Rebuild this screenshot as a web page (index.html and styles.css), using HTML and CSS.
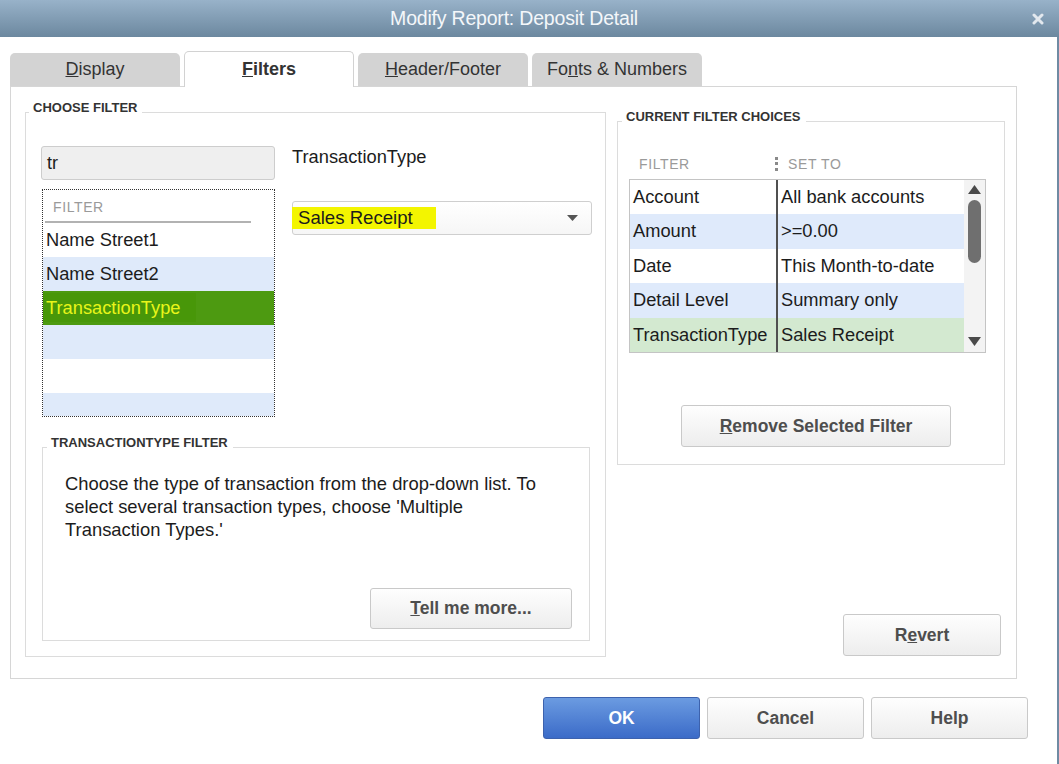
FILE: index.html
```html
<!DOCTYPE html>
<html>
<head>
<meta charset="utf-8">
<title>Modify Report: Deposit Detail</title>
<link rel="stylesheet" href="styles.css">
</head>
<body>
<div class="window">
  <div class="titlebar">
    <div class="title">Modify Report: Deposit Detail</div>
    <div class="close">
      <svg width="12" height="12" viewBox="0 0 12 12"><path d="M2 2L10 10M10 2L2 10" stroke="#e2e8ee" stroke-width="3" stroke-linecap="round"/></svg>
    </div>
  </div>
  <div class="dialog">
    <div class="tabs">
      <div class="tab"><u>D</u>isplay</div>
      <div class="tab active"><u>F</u>ilters</div>
      <div class="tab"><u>H</u>eader/Footer</div>
      <div class="tab">Fo<u>n</u>ts &amp; Numbers</div>
    </div>
    <div class="panel">
      <fieldset class="group choose">
        <legend class="legend">CHOOSE FILTER</legend>
        <div class="choose-top">
          <div class="choose-left">
            <div class="search">tr</div>
            <div class="list">
              <div class="list-head"><span class="list-head-text">FILTER</span></div>
              <div class="list-row">Name Street1</div>
              <div class="list-row alt">Name Street2</div>
              <div class="list-row sel"><span class="sel-text">TransactionType</span></div>
              <div class="list-row alt"></div>
              <div class="list-row"></div>
              <div class="list-row alt"></div>
            </div>
          </div>
          <div class="choose-right">
            <div class="field-label">TransactionType</div>
            <div class="dropdown">
              <span class="marker">Sales Receipt</span>
              <svg class="caret" width="11" height="6" viewBox="0 0 11 6"><path d="M0 0H11L5.5 6Z" fill="#555"/></svg>
            </div>
          </div>
        </div>
        <fieldset class="group tt">
          <legend class="legend">TRANSACTIONTYPE FILTER</legend>
          <p class="desc">Choose the type of transaction from the drop-down list. To<br>select several transaction types, choose 'Multiple<br>Transaction Types.'</p>
          <button class="btn tell"><u>T</u>ell me more...</button>
        </fieldset>
      </fieldset>
      <div class="right-col">
        <fieldset class="group current">
          <legend class="legend">CURRENT FILTER CHOICES</legend>
          <div class="cur-head">
            <span class="ch-filter">FILTER</span>
            <span class="ch-sep"></span>
            <span class="ch-set">SET TO</span>
          </div>
          <div class="cur-table">
            <div class="cur-rows">
              <div class="cur-row"><span class="c1">Account</span><span class="c2">All bank accounts</span></div>
              <div class="cur-row alt"><span class="c1">Amount</span><span class="c2">&gt;=0.00</span></div>
              <div class="cur-row"><span class="c1">Date</span><span class="c2">This Month-to-date</span></div>
              <div class="cur-row alt"><span class="c1">Detail Level</span><span class="c2">Summary only</span></div>
              <div class="cur-row green"><span class="c1">TransactionType</span><span class="c2">Sales Receipt</span></div>
            </div>
            <div class="scrollbar">
              <svg width="13" height="9" viewBox="0 0 13 9"><path d="M0 9H13L6.5 0Z" fill="#4a4a4a"/></svg>
              <div class="thumb"></div>
              <svg class="down" width="13" height="9" viewBox="0 0 13 9"><path d="M0 0H13L6.5 9Z" fill="#4a4a4a"/></svg>
            </div>
          </div>
          <button class="btn remove"><u>R</u>emove Selected Filter</button>
        </fieldset>
        <button class="btn revert">R<u>e</u>vert</button>
      </div>
    </div>
    <div class="footer">
      <button class="btn primary">OK</button>
      <button class="btn">Cancel</button>
      <button class="btn">Help</button>
    </div>
  </div>
</div>
</body>
</html>
```
FILE: styles.css
```css
* { box-sizing: border-box; }
html, body { margin: 0; padding: 0; background: #fff; }
body { font-family: "Liberation Sans", Arial, sans-serif; color: #1c1c1c; }

.window { width: 1059px; height: 764px; overflow: hidden; display: flex; flex-direction: column; }

.titlebar {
  height: 37px;
  display: flex;
  align-items: center;
  background: linear-gradient(#98b2c9, #6c889f);
}
.title { flex: 1; text-align: center; color: #f4f7fa; font-size: 19.5px; letter-spacing: -0.2px; }
.close { width: 31px; display: flex; align-items: center; padding-left: 4px; }
.close svg { display: block; }

.dialog {
  flex: 1;
  border-right: 2px solid #6f8ba3;
  padding: 14px 0 0 10px;
}

.tabs { display: flex; align-items: flex-end; gap: 4px; height: 35px; }
.tab {
  width: 170px;
  height: 33px;
  background: #d3d3d3;
  border-radius: 5px 5px 0 0;
  display: flex; align-items: center; justify-content: center;
  font-size: 18px; color: #333;
}
.tab.active {
  height: 36px;
  margin-bottom: -1px;
  background: #fff;
  border: 1px solid #d2d2d2;
  border-bottom: none;
  font-weight: bold;
  position: relative;
  z-index: 1;
}

.panel {
  width: 1007px;
  height: 593px;
  border: 1px solid #d6d6d6;
  display: flex;
  padding: 14px 11px 21px 14px;
  gap: 11px;
}

.group { margin: 0; min-width: 0; border: 1px solid #dcdcdc; }
.legend {
  font-size: 13px; line-height: 13px; font-weight: bold; color: #333;
  padding: 0 5px 9px 4px;
}

.choose { width: 581px; padding: 23px 15px 15px 15px; display: flex; flex-direction: column; }
.choose > .legend { margin-left: -12px; }

.choose-top { display: flex; }
.choose-left { width: 234px; }
.search {
  height: 34px;
  background: #efefef;
  border: 1px solid #cdcdcd;
  border-radius: 3px;
  font-size: 18px;
  padding: 6px 0 0 5px;
}
.list {
  margin: 9px 0 0 1px;
  width: 233px;
  height: 228px;
  border: 1px dotted #333;
  overflow: hidden;
}
.list-head { height: 33px; padding: 9px 0 0 2px; }
.list-head-text {
  display: block; width: 206px; height: 24px;
  border-bottom: 2px solid #b2b2b2;
  color: #9a9a9a; font-size: 14px; letter-spacing: 0.6px; padding-left: 8px;
}
.list-row { height: 34px; font-size: 18.3px; padding: 6px 0 0 3px; background: #fff; }
.list-row.alt { background: #dfeafa; }
.list-row.sel { background: #4d9a11; padding: 2px 0 0 0; }
.sel-text { display: inline-block; height: 29px; padding: 4px 16px 0 3px; background: #489709; color: #e8f51a; }

.choose-right { margin-left: 17px; flex: 1; }
.field-label { font-size: 18.3px; padding-top: 0; height: 55px; line-height: 21px; }
.dropdown {
  width: 300px; height: 34px;
  border: 1px solid #cfcfcf;
  border-radius: 3px;
  background: linear-gradient(#ffffff, #f6f6f6);
  display: flex; align-items: center; justify-content: space-between;
  padding-right: 13px;
}
.marker {
  font-size: 18.6px;
  background: #f3f500;
  padding: 0 23px 0 6px;
  margin-left: -1px;
}
.caret { display: block; }

.tt { margin: 19px 0 0 1px; width: 548px; padding: 14px 17px 11px 22px; display: flex; flex-direction: column; }
.tt > .legend { margin-left: -18px; }
.desc { margin: 0; font-size: 18.4px; line-height: 23px; color: #1c1c1c; }

.btn {
  font-family: "Liberation Sans", Arial, sans-serif;
  font-size: 17.5px; font-weight: bold; color: #4e4e4e;
  background: linear-gradient(#fefefe, #ededed);
  border: 1px solid #c9c9c9;
  border-radius: 3px;
  height: 42px;
  padding: 0;
}
.tell { width: 202px; height: 41px; align-self: flex-end; margin-top: 47px; }

.right-col { width: 388px; display: flex; flex-direction: column; padding-top: 9px; }
.current { width: 388px; padding: 22px 18px 17px 11px; display: flex; flex-direction: column; }
.current > .legend { margin-left: -7px; }
.cur-head { height: 25px; padding-bottom: 6px; display: flex; align-items: center; font-size: 14px; color: #9a9a9a; letter-spacing: 0.6px; }
.ch-filter { width: 146px; padding-left: 10px; }
.ch-sep { width: 3px; height: 14px; border-left: 3px dotted #8a8a8a; margin-right: 10px; }
.cur-table { display: flex; width: 357px; height: 174px; border: 1px solid #c4c4c4; }
.cur-rows { width: 334px; }
.cur-row { height: 34.4px; display: flex; font-size: 18.3px; background: #fff; }
.cur-row.alt { background: #dfeafb; }
.cur-row.green { background: #d3e9d0; }
.c1 { width: 148px; padding: 6px 0 0 3px; border-right: 2px solid #505050; white-space: nowrap; overflow: hidden; }
.c2 { flex: 1; padding: 6px 0 0 3px; white-space: nowrap; }
.scrollbar { flex: 1; background: #f3f3f3; display: flex; flex-direction: column; align-items: center; padding-top: 5px; }
.scrollbar svg { display: block; }
.thumb { width: 13px; height: 63px; background: #6f6f6f; border-radius: 7px; margin-top: 6px; }
.scrollbar .down { margin-top: auto; margin-bottom: 6px; }

.remove { width: 270px; margin: 52px 0 0 52px; }

.revert { width: 158px; margin-top: auto; align-self: flex-end; margin-right: 4px; margin-bottom: 1px; }

.footer { display: flex; justify-content: flex-end; gap: 7px; margin-top: 18px; padding-right: 29px; }
.footer .btn { width: 157px; }
.btn.primary {
  color: #fff;
  background: linear-gradient(#6b9be1, #3b6bc8);
  border-color: #3d62ad;
}
```
